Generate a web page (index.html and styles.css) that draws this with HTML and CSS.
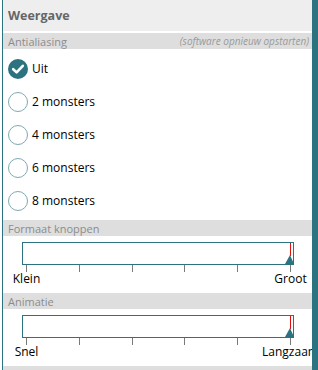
FILE: index.html
```html
<!DOCTYPE html>
<html>
<head>
<meta charset="utf-8">
<link rel="stylesheet" href="styles.css">
</head>
<body>
<div class="panel">
  <div class="title">Weergave</div>
  <div class="sect"><span>Antialiasing</span><span class="note">(software opnieuw opstarten)</span></div>
  <div class="radios">
    <div class="radio checked"><span class="dot"><svg viewBox="0 0 20 20" width="20" height="20"><circle cx="10" cy="10" r="10" fill="#2c7380"/><path d="M5.2 10.2 L8.6 13.4 L14.8 6.8" fill="none" stroke="#fff" stroke-width="2.6" stroke-linecap="round" stroke-linejoin="round"/></svg></span><span>Uit</span></div>
    <div class="radio"><span class="dot"></span><span>2 monsters</span></div>
    <div class="radio"><span class="dot"></span><span>4 monsters</span></div>
    <div class="radio"><span class="dot"></span><span>6 monsters</span></div>
    <div class="radio"><span class="dot"></span><span>8 monsters</span></div>
  </div>
  <div class="sect"><span>Formaat knoppen</span></div>
  <div class="slider">
    <div class="box"><span class="marker"></span><span class="thumb"></span></div>
    <div class="ticks"><i></i><i></i><i></i><i></i><i></i><i></i></div>
    <div class="labels"><span><b>Klein</b></span><span><b>Groot</b></span></div>
  </div>
  <div class="sect"><span>Animatie</span></div>
  <div class="slider">
    <div class="box"><span class="marker"></span><span class="thumb"></span></div>
    <div class="ticks"><i></i><i></i><i></i><i></i><i></i><i></i></div>
    <div class="labels"><span><b>Snel</b></span><span><b>Langzaam</b></span></div>
  </div>
  <div class="sect end"></div>
</div>
<div class="scrollbar"></div>
</body>
</html>
```
FILE: styles.css
```css
html, body {
  margin: 0;
  padding: 0;
  background: #fff;
  width: 318px;
  height: 370px;
  overflow: hidden;
  font-family: "Open Sans", "Noto Sans", sans-serif;
}
.panel {
  margin-left: 2px;
  border-left: 1px solid #2c7380;
  width: 309px;
  height: 370px;
}
.title {
  height: 31px;
  background: #eeeeee;
  color: #666666;
  font-weight: 700;
  font-size: 12.5px;
  padding-left: 5px;
  display: flex;
  align-items: center;
  margin-bottom: 2px;
  padding-bottom: 1px;
  box-sizing: border-box;
}
.sect {
  height: 16px;
  background: #dedede;
  color: #8c8c8c;
  font-size: 11px;
  padding: 0 5px;
  display: flex;
  align-items: center;
  justify-content: space-between;
}
.sect .note {
  font-style: italic;
  color: #9a9a9a;
  font-size: 10px;
  margin-right: -2px;
}
.sect.end { height: 4px; }
.radios {
  padding: 3px 0;
}
.radio {
  height: 33px;
  display: flex;
  align-items: center;
  padding-left: 5px;
  font-size: 12px;
  color: #000;
}
.dot {
  width: 20px;
  height: 20px;
  box-sizing: border-box;
  border: 1.5px solid #7fa9b1;
  border-radius: 50%;
  margin-right: 4px;
  display: block;
}
.radio.checked .dot { border: 0; }
.dot svg { display: block; }
.slider {
  height: 57px;
  padding-top: 6px;
  box-sizing: border-box;
}
.box {
  position: relative;
  margin-left: 19px;
  width: 272px;
  height: 23px;
  box-sizing: border-box;
  border: 1.5px solid #2c7380;
  background: #fff;
}
.marker {
  position: absolute;
  right: 2px;
  top: 0;
  bottom: 8px;
  width: 1px;
  background: #e01010;
}
.thumb {
  position: absolute;
  right: 0;
  bottom: 0;
  width: 0;
  height: 0;
  border-left: 5px solid transparent;
  border-right: 4px solid transparent;
  border-bottom: 9px solid #2c7380;
  margin-right: -1px;
}
.ticks {
  margin-left: 23px;
  width: 265px;
  height: 7px;
  display: flex;
  justify-content: space-between;
}
.ticks i {
  display: block;
  width: 1px;
  height: 7px;
  background: #7a7a7a;
}
.labels {
  margin-left: 23px;
  width: 265px;
  display: flex;
  justify-content: space-between;
  font-size: 12px;
  color: #000;
  line-height: 14px;
}
.labels span {
  width: 1px;
  display: flex;
  justify-content: center;
}
.labels b { font-weight: 400; white-space: nowrap; }
.scrollbar {
  position: absolute;
  left: 312px;
  top: 0;
  width: 6px;
  height: 370px;
  background: #2c7380;
}
```
